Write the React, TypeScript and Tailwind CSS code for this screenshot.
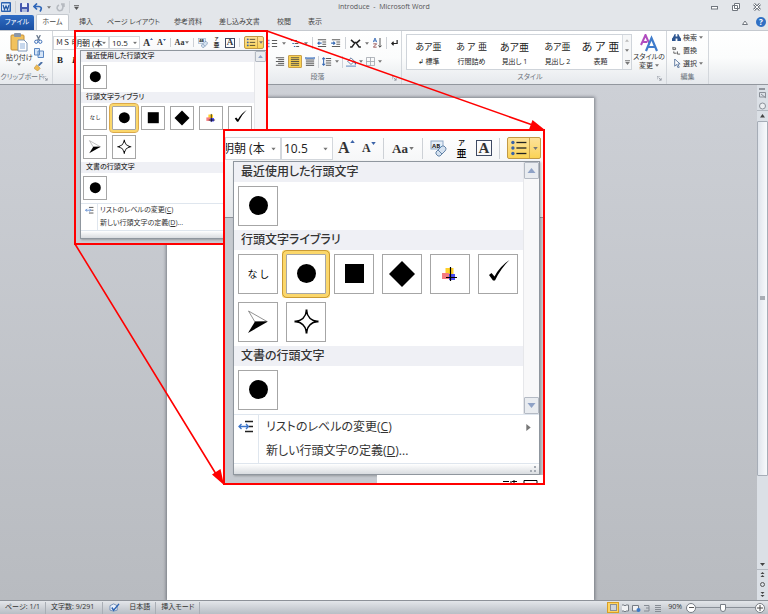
import React from "react";

type Size = "small" | "large";

const JP = "font-['Open_Sans','Noto_Sans_CJK_JP',sans-serif] [font-feature-settings:'palt']";

function Caret({ className = "" }: { className?: string }) {
  return (
    <svg viewBox="0 0 6 4" className={"shrink-0 " + (className || "h-[3px] w-[4px]")} aria-hidden="true">
      <path d="M0 0H6L3 4Z" fill="#777" />
    </svg>
  );
}

function Sep() {
  return <span className="h-3 w-px shrink-0 bg-[#cdd1d6]" />;
}

/* ---------- bullet glyphs ---------- */

type Glyph = "none" | "dot" | "square" | "diamond" | "plus" | "check" | "arrow" | "star";

function BulletGlyph({ kind }: { kind: Glyph }) {
  return (
    <svg viewBox="0 0 38 38" className="block h-full w-full" aria-hidden="true">
      {kind === "dot" && <circle cx="19.5" cy="18.5" r="9.5" />}
      {kind === "square" && <rect x="10" y="9" width="19" height="19" />}
      {kind === "diamond" && <path d="M19 6L32 19L19 32L6 19Z" />}
      {kind === "plus" && (
        <g>
          <rect x="14.500" y="13" width="8" height="7" fill="#ffd02a" />
          <rect x="11" y="18" width="7" height="6" fill="#f47a80" />
          <rect x="18" y="19" width="6" height="6" fill="#4a4af0" />
          <path d="M19.500 12V26M15 22.500H26" stroke="#000" strokeWidth="1.200" />
        </g>
      )}
      {kind === "check" && <path d="M10 20L12.500 18L15.500 21.500Q21 11 30.500 5Q22 13 16 25.500L14 25.500Z" />}
      {kind === "arrow" && (
        <g>
          <path d="M9.500 8L28 18.500L16 19Z" fill="#fff" stroke="#777" strokeWidth="0.800" />
          <path d="M16 18.500L29 18.500L9 30Z" />
        </g>
      )}
      {kind === "star" && (
        <g fill="none" stroke="#000" strokeWidth="1.300">
          <path d="M19.500 9.500Q21 17 28.500 18.500Q21 20 19.500 27.500Q18 20 10.500 18.500Q18 17 19.500 9.500Z" transform="translate(-2.340 -2.220) scale(1.120)" />
          <path d="M19.500 6.500V11M19.500 26V30.500M7.500 18.500H12M27 18.500H31.500" strokeWidth="2" />
        </g>
      )}
    </svg>
  );
}

const sizes = {
  small: {
    header: "h-[11px] pl-[5px] text-[7px]",
    grid: "gap-[5px] py-[3px] pl-[2px]",
    cell: "size-6",
    selected: "ring-2 ring-[#fbd76b] outline-1 outline-offset-2 outline-[#dba94a] rounded-[1px]",
    none: "text-[5px]",
    list: "w-[173px]",
    scroll: "w-[12px]",
    scrollButton: "h-[11px]",
    scrollCaret: "h-[3px] w-[5px]",
    item: "h-[13px] text-[7px]",
    iconCol: "w-[17px]",
    icon: "size-[9px]",
    label: "pl-[2px]",
    footer: "h-[7px]",
    combo: "h-[13px] text-[8px]",
    combo1: "w-[33px]",
    combo2: "w-[31px]",
    caret: "right-[2px] h-[3px] w-[4px]",
    row: "h-[18px] pt-[4px]",
    tools: "pl-[3px] pr-[2px]",
    grow: "w-[10px] text-[10px]",
    shrink: "w-[9px] text-[8px]",
    tri: "h-[2px] w-[3px]",
    aa: "w-[14px] text-[8px]",
    aaCaret: "h-[3px] w-[4px]",
    tool: "size-[10px]",
    ruby: "w-[9px]",
    rubyTop: "text-[4px] leading-[5px]",
    rubyBase: "text-[6px] leading-[7px]",
    boxed: "size-[10px] text-[9px] leading-[9px]",
    split: "h-[13px] w-[20px]",
    splitMain: "w-[13px]",
    sep: "h-[9px]",
  },
  large: {
    header: "h-5 pl-[7px] text-[12px]",
    grid: "gap-2 py-1 pl-1",
    cell: "size-10",
    selected: "ring-4 ring-[#fbd76b] outline-1 outline-offset-3 outline-[#c99a35] rounded-[1px]",
    none: "text-[10px]",
    list: "w-[289px]",
    scroll: "w-[16px]",
    scrollButton: "h-[17px]",
    scrollCaret: "h-[5px] w-[9px]",
    item: "h-6 text-[12px]",
    iconCol: "w-[25px]",
    icon: "size-[16px]",
    label: "pl-[7px]",
    footer: "h-[10px]",
    combo: "h-[23px] text-[12px]",
    combo1: "w-[56px]",
    combo2: "w-[52px]",
    caret: "right-[4px] h-[3px] w-[5px]",
    row: "h-[30px] pt-[6px]",
    tools: "pl-[5px] pr-[2px]",
    grow: "w-[17px] text-[16px]",
    shrink: "w-[14px] text-[12px]",
    tri: "h-[3px] w-[5px]",
    aa: "w-[24px] text-[13px]",
    aaCaret: "h-[3px] w-[5px]",
    tool: "size-[17px]",
    ruby: "w-[15px]",
    rubyTop: "text-[7px] leading-[9px]",
    rubyBase: "text-[10px] leading-[12px]",
    boxed: "size-[16px] text-[15px] leading-[14px]",
    split: "h-[22px] w-[34px]",
    splitMain: "w-[22px]",
    sep: "h-[21px]",
  },
} as const;

function Combo({ size, label, value, width, shift }: { size: Size; label: string; value: string; width: string; shift: string }) {
  const s = sizes[size];
  return (
    <div className={"relative shrink-0 overflow-hidden border border-[#d3d7dc] bg-white " + s.combo + " " + width}>
      <select aria-label={label} defaultValue={value} className={"h-full w-full appearance-none bg-transparent text-[#222] outline-none " + shift}>
        <option>{value}</option>
      </select>
      <svg viewBox="0 0 6 4" className={"pointer-events-none absolute top-1/2 -translate-y-1/2 " + s.caret} aria-hidden="true">
        <path d="M0 0H6L3 4Z" fill="#777" />
      </svg>
    </div>
  );
}

function EraserIcon() {
  return (
    <svg viewBox="0 0 17 17" className="h-full w-full" aria-hidden="true">
      <rect x="1" y="1" width="12" height="8" fill="#e6eef7" stroke="#8ea8c6" />
      <text x="2" y="7.500" fontSize="6" fontWeight="700" fill="#222">AB</text>
      <path d="M6 12L12 6Q14 5 16 8Q16 10 15 11L10 16Q8 17 6 14Z" fill="#d5e2f0" stroke="#6685a8" />
      <path d="M8 10L12 14" stroke="#6685a8" />
    </svg>
  );
}

function BulletsIcon() {
  return (
    <svg viewBox="0 0 16 16" className="h-[80%] w-[80%]" aria-hidden="true">
      {[2.5, 8, 13.5].map((y) => (
        <g key={y}>
          <circle cx="2.500" cy={y} r="1.700" fill="#3b63a8" />
          <path d={`M6 ${y}H16`} stroke="#222" strokeWidth="1.300" />
        </g>
      ))}
    </svg>
  );
}

function Toolbar({ size }: { size: Size }) {
  const s = sizes[size];
  const bar = <span className={"w-px shrink-0 bg-[#cdd1d6] " + s.sep} />;
  const btn = "relative flex shrink-0 items-center justify-center ";
  return (
    <div className={"flex items-start " + s.row}>
      <Combo size={size} label="フォント" value="明朝 (本" width={s.combo1} shift={size === "large" ? "-ml-1" : "-ml-[3px]"} />
      <Combo size={size} label="フォント サイズ" value="10.5" width={s.combo2} shift="pl-[2px]" />
      <div className={"flex min-w-0 flex-1 items-center justify-between " + s.tools}>
        <button className={btn + "justify-start font-['Liberation_Serif',serif] leading-none font-bold text-[#333] " + s.grow}>
          A
          <svg viewBox="0 0 6 4" className={"absolute top-0 right-0 " + s.tri}><path d="M0 4H6L3 0Z" fill="#3b63a8" /></svg>
        </button>
        <button className={btn + "justify-start font-['Liberation_Serif',serif] leading-none font-bold text-[#333] " + s.shrink}>
          A
          <svg viewBox="0 0 6 4" className={"absolute top-0 right-0 " + s.tri}><path d="M0 0H6L3 4Z" fill="#3b63a8" /></svg>
        </button>
        {bar}
        <button className={btn + "gap-px font-['Liberation_Serif',serif] leading-none font-bold text-[#333] " + s.aa}>
          Aa
          <Caret className={s.aaCaret} />
        </button>
        {bar}
        <button aria-label="書式のクリア" className={btn + s.tool}><EraserIcon /></button>
        <button className={btn + "flex-col font-medium text-black " + s.ruby}>
          <span className={s.rubyTop}>ア</span>
          <span className={s.rubyBase}>亜</span>
        </button>
        <button className={btn + "border border-[#3f4a63] font-['Liberation_Serif',serif] font-bold text-[#333] " + s.boxed}>A</button>
        {bar}
        <button aria-label="箇条書き" className={"flex shrink-0 rounded-[2px] border border-[#c29a45] bg-linear-to-b from-[#fde29a] to-[#fbd353] " + s.split}>
          <span className={"flex h-full items-center justify-center border-r border-[#c9a350] " + s.splitMain}><BulletsIcon /></span>
          <span className="flex h-full flex-1 items-center justify-center"><Caret className={s.aaCaret} /></span>
        </button>
      </div>
    </div>
  );
}

function Cells({ size, items, selected }: { size: Size; items: Glyph[]; selected?: number }) {
  const s = sizes[size];
  return (
    <div className={"flex flex-wrap " + s.grid}>
      {items.map((k, i) => (
        <button
          key={i}
          className={"flex items-center justify-center border border-[#a6a6a6] bg-white text-black " + s.cell + " " + (i === selected ? s.selected : "")}
        >
          {k === "none" ? <span className={s.none}>な し</span> : <BulletGlyph kind={k} />}
        </button>
      ))}
    </div>
  );
}

function BulletPanel({ size }: { size: Size }) {
  const s = sizes[size];
  const header = "flex items-center bg-[#eff0f5] font-medium text-[#333] " + s.header;
  const arrow = "flex w-full items-center justify-center rounded-[1px] border border-[#b4bac4] bg-[#e9ecf0] " + s.scrollButton;
  return (
    <section className="border border-[#8f969e] bg-white shadow-[1px_1px_2px_rgba(0,0,0,0.25)]">
      <div className="flex">
        <div className={"shrink-0 " + s.list}>
          <h3 className={header}>最近使用した行頭文字</h3>
          <Cells size={size} items={["dot"]} />
          <h3 className={header}>行頭文字ライブラリ</h3>
          <Cells size={size} items={["none", "dot", "square", "diamond", "plus", "check", "arrow", "star"]} selected={1} />
          <h3 className={header}>文書の行頭文字</h3>
          <Cells size={size} items={["dot"]} />
        </div>
        <div className={"flex shrink-0 flex-col justify-between border-l border-[#e6e7ea] bg-[#f8f8f9] " + s.scroll}>
          <button aria-label="上へ" className={arrow}>
            <svg viewBox="0 0 8 5" className={s.scrollCaret}><path d="M0 5H8L4 0Z" fill="#8fa2c6" /></svg>
          </button>
          <button aria-label="下へ" className={arrow}>
            <svg viewBox="0 0 8 5" className={s.scrollCaret}><path d="M0 0H8L4 5Z" fill="#8fa2c6" /></svg>
          </button>
        </div>
      </div>
      <div className="border-y border-[#dfe6ee] text-[#333]">
        <button className={"flex w-full items-center " + s.item}>
          <span className={"flex h-full items-center justify-center border-r border-[#dfe6ee] " + s.iconCol}>
            <svg viewBox="0 0 16 16" className={s.icon} aria-hidden="true">
              <path d="M7 2.500H15M11 7.500H15M7 12.500H15" stroke="#222" strokeWidth="1.300" />
              <path d="M1 7.500H10M3.500 5L1 7.500L3.500 10M8 5L10.500 7.500L8 10" stroke="#3b73c8" strokeWidth="1.300" fill="none" />
            </svg>
          </span>
          <span className={"flex-1 text-left " + s.label}>リストのレベルの変更(<u>C</u>)</span>
          <svg viewBox="0 0 5 8" className="mr-2 h-[7px] w-[5px]" aria-hidden="true"><path d="M0 0L5 4L0 8Z" fill="#777" /></svg>
        </button>
        <button className={"flex w-full items-center " + s.item}>
          <span className={"h-full border-r border-[#dfe6ee] " + s.iconCol} />
          <span className={"flex-1 text-left " + s.label}>新しい行頭文字の定義(<u>D</u>)...</span>
        </button>
      </div>
      <div className={"flex items-end justify-end bg-linear-to-b from-white to-[#d9dce0] pr-[3px] pb-[2px] " + s.footer}>
        <svg viewBox="0 0 6 6" className="size-[6px]" aria-hidden="true">
          <path d="M4 0H6V2H4ZM4 4H6V6H4ZM0 4H2V6H0Z" fill="#a5abb3" />
        </svg>
      </div>
    </section>
  );
}

/* ---------- ribbon ---------- */

const tabs = ["挿入", "ページ レイアウト", "参考資料", "差し込み文書", "校閲", "表示"];
const tabWidths = ["w-[34px]", "w-[61px]", "w-[48px]", "w-[55px]", "w-[34px]", "w-[28px]"];

function Lines({ kind }: { kind: "number" | "multi" | "dedent" | "indent" | "right" | "justify" | "distribute" | "spacing" }) {
  const paths = {
    number: "M5 2H12M5 6H12M5 10H12",
    multi: "M4 2H9M6 6H11M8 10H12",
    dedent: "M1 1H12M7 4H12M7 7H12M1 10H12",
    indent: "M1 1H12M7 4H12M7 7H12M1 10H12",
    right: "M1 1H12M4 3.500H12M1 6H12M4 8.500H12M1 11H12",
    justify: "M1 1H12M1 3.500H12M1 6H12M1 8.500H12M1 11H12",
    distribute: "M1 4H12M1 6.500H12M1 9H12M1 11.500H12",
    spacing: "M5 2H12M5 5H12M5 8H12M5 11H12",
  };
  const blue = {
    number: "M1 1V3M1 5V7M1 9V11",
    multi: "M1 2H3M3 6H5M5 10H7",
    dedent: "M6 5.500H1M3 3.500L1 5.500L3 7.500",
    indent: "M0 5.500H5M3 3.500L5 5.500L3 7.500",
    right: "",
    justify: "",
    distribute: "M1 0V3M12 0V3M2 1.500H11",
    spacing: "M2 1V11M0 3L2 1L4 3M0 9L2 11L4 9",
  };
  return (
    <svg viewBox="0 0 13 12" className="h-[9px] w-[10px] shrink-0" aria-hidden="true" fill="none">
      <path d={paths[kind]} stroke="#4a4a4a" strokeWidth="1.200" />
      <path d={blue[kind]} stroke="#3569b5" strokeWidth="1.400" />
    </svg>
  );
}

function Launcher() {
  return (
    <svg viewBox="0 0 6 6" className="absolute right-1 bottom-[3px] size-[5px]" aria-hidden="true">
      <path d="M0 4V0H4M2 2L5 5M5 2.500V5H2.500" stroke="#8b929b" fill="none" />
    </svg>
  );
}

function Group({ label, width, children, launcher }: { label: string; width: string; children: React.ReactNode; launcher?: boolean }) {
  return (
    <section className={"relative flex shrink-0 flex-col border-r border-[#d3d7dc] " + width}>
      <div className="flex-1">{children}</div>
      <div className="h-[12px] text-center text-[7px] leading-[10px] whitespace-nowrap text-[#6d747d]">{label}</div>
      {launcher && <Launcher />}
    </section>
  );
}

const styleItems = [
  { sample: "あア亜", name: "↲ 標準", cls: "text-[9px]" },
  { sample: "あ ア 亜", name: "行間詰め", cls: "text-[9px]" },
  { sample: "あア亜", name: "見出し 1", cls: "text-[10px]" },
  { sample: "あア亜", name: "見出し 2", cls: "text-[9px]" },
  { sample: "あ ア 亜", name: "表題", cls: "text-[11px]" },
];

function Ribbon() {
  return (
    <div className="flex h-[55px] shrink-0 overflow-hidden border-t border-b border-t-[#c5c9cf] border-b-[#92979e] bg-linear-to-b from-white via-[#fbfcfc] to-[#e6e9ed]">
      <Group label="クリップボード" width="w-[53px] pr-[8px]" launcher>
        <div className="flex justify-between pt-[2px] pl-[6px]">
          <button className="flex flex-col items-center text-[7px] leading-[11px] whitespace-nowrap text-[#333]">
            <svg viewBox="0 0 18 19" className="h-[19px] w-[18px]" aria-hidden="true">
              <rect x="1" y="2" width="13" height="15" rx="1" fill="#f2c25e" stroke="#c68f35" />
              <rect x="4" y="0" width="7" height="4" rx="1" fill="#8b97a8" />
              <path d="M8 7H14L17 10V18H8Z" fill="#fff" stroke="#7d95b5" />
              <path d="M10 11H15M10 13H15M10 15H15" stroke="#8fb0da" />
            </svg>
            貼り付け
            <Caret />
          </button>
          <div className="flex flex-col gap-1 pt-[2px]">
            <svg viewBox="0 0 10 10" className="size-[9px]"><path d="M3 0L6 6M7 0L4 6" stroke="#68778c" strokeWidth="1.400" /><circle cx="2.500" cy="7.500" r="1.800" fill="none" stroke="#2c63b2" /><circle cx="7" cy="7.500" r="1.800" fill="none" stroke="#2c63b2" /></svg>
            <svg viewBox="0 0 10 10" className="size-[10px]"><path d="M0.500 0.500H5.500V7H0.500ZM4 3H9.500V9.500H4Z" fill="#d6e5f7" stroke="#5c88c2" /></svg>
            <svg viewBox="0 0 10 10" className="size-[9px]"><path d="M9 0L5 4" stroke="#4a6fa5" strokeWidth="2" /><path d="M3 3L7 7L4 10L0 7Z" fill="#edbb55" stroke="#b07f27" strokeWidth="0.500" /></svg>
          </div>
        </div>
      </Group>
      <Group label="フォント" width="w-[203px]">
        <div className="mt-[5px] flex h-[14px] w-[54px] items-center border border-[#d3d7dc] bg-white pl-[2px] text-[7px] whitespace-nowrap text-[#222] [font-feature-settings:normal]">ＭＳ 明朝</div>
        <div className="flex gap-[9px] pt-[5px] pl-[4px] font-['Liberation_Serif',serif] text-[9px] leading-[11px] font-bold text-[#222]">
          <button>B</button>
          <button className="italic">I</button>
        </div>
      </Group>
      <Group label="段落" width="w-[146px] pr-[22px]" launcher>
        <div className="flex h-[24px] w-[146px] items-center gap-[4px] pl-[12px]">
          <Lines kind="number" /><Caret /><Lines kind="multi" /><Caret /><Sep />
          <Lines kind="dedent" /><Lines kind="indent" /><Sep />
          <svg viewBox="0 0 12 10" className="h-[9px] w-[11px] shrink-0"><path d="M0 9H2L5.500 4H6.500L10 9H12M1 1L5 4.500M11 1L7 4.500" stroke="#222" strokeWidth="1.700" fill="none" /></svg>
          <Caret />
          <svg viewBox="0 0 10 12" className="h-[10px] w-[9px] shrink-0"><path d="M0 5L2 0L4 5M0.500 3.500H3.500" stroke="#2c63b2" fill="none" /><path d="M0 7H4L0 11H4" stroke="#8b3c3c" fill="none" /><path d="M8 0V11M6 9L8 11L10 9" stroke="#333" fill="none" /></svg>
          <Sep />
          <svg viewBox="0 0 8 8" className="size-[7px] shrink-0"><path d="M7 0V4H1M3 2L1 4L3 6" stroke="#222" strokeWidth="1.400" fill="none" /></svg>
        </div>
        <div className="flex w-[146px] items-center gap-[3px] pl-[19px]">
          <Lines kind="right" />
          <button aria-label="両端揃え" className="flex h-[13px] w-[14px] items-center justify-center rounded-[1px] border border-[#c9a04a] bg-[#fbd353]"><Lines kind="justify" /></button>
          <Lines kind="distribute" />
          <Sep /><Lines kind="spacing" /><Caret /><Sep />
          <svg viewBox="0 0 12 12" className="size-[10px] shrink-0"><path d="M2 5L6 1L10 5L6 9Z" fill="#fff" stroke="#4c6791" /><path d="M10 5Q12 7 11 9" stroke="#2c63b2" strokeWidth="1.500" fill="none" /><path d="M0 11H12" stroke="#9bb5d6" strokeWidth="2" /></svg>
          <Caret />
          <svg viewBox="0 0 10 10" className="size-[9px] shrink-0"><path d="M0.500 0.500H9.500V9.500H0.500ZM5 0V10M0 5H10" stroke="#a6abb2" fill="none" /></svg>
          <Caret />
        </div>
      </Group>
      <Group label="スタイル" width="w-[265px] pr-[8px]" launcher>
        <div className="flex gap-[3px] pt-[3px] pl-1">
          <div className="flex h-[36px] w-[226px] shrink-0 border border-[#cfd4da] bg-white">
            {styleItems.map((s, i) => (
              <button key={i} className="flex w-[43px] shrink-0 flex-col items-center justify-between pt-px pb-[2px] whitespace-nowrap text-[#222]">
                <span className={"flex h-[22px] items-center leading-none " + s.cls}>{s.sample}</span>
                <span className="text-[7px] leading-[10px]">{s.name}</span>
              </button>
            ))}
            <div className="flex flex-1 flex-col items-center justify-around border-l border-[#d9dde2] bg-[#f6f7f8]">
              <svg viewBox="0 0 6 4" className="h-[3px] w-[4px]"><path d="M0 4H6L3 0Z" fill="#bbb" /></svg>
              <Caret />
              <svg viewBox="0 0 6 6" className="h-[5px] w-[5px]"><path d="M0 0.500H6" stroke="#777" /><path d="M0 2H6L3 6Z" fill="#777" /></svg>
            </div>
          </div>
          <button className="flex w-[28px] flex-col items-center text-[7px] leading-[9px] whitespace-nowrap text-[#333]">
            <svg viewBox="0 0 18 18" className="size-[18px]" aria-hidden="true">
              <path d="M1 11L5.500 1L9 9M2.500 8H7" stroke="#b04cbe" strokeWidth="2" fill="none" />
              <path d="M6 17L11.500 4L17 17M8 13H15" stroke="#3e7bcb" strokeWidth="2.200" fill="none" />
            </svg>
            スタイルの
            <span className="flex items-center gap-[2px]">変更<Caret /></span>
          </button>
        </div>
      </Group>
      <Group label="編集" width="w-[42px]">
        <div className="flex flex-col gap-[2px] pt-px pl-[5px] text-[7px] leading-[11px] text-[#333]">
          <button className="flex items-center gap-[2px]">
            <svg viewBox="0 0 10 10" className="size-[9px]"><path d="M1 5L3 1H4V9H0V6ZM9 5L7 1H6V9H10V6ZM4 4H6V6H4Z" fill="#2d5590" /></svg>
            検索 <Caret />
          </button>
          <button className="flex items-center gap-[2px]">
            <svg viewBox="0 0 10 10" className="size-[9px]"><path d="M1 4V1M1 4H4V2H1M6 9V6M6 9H9M2 6V8H5" stroke="#555" fill="none" /></svg>
            置換
          </button>
          <button className="flex items-center gap-[2px]">
            <svg viewBox="0 0 10 10" className="size-[9px]"><path d="M3 0V8L5 6L7 10L8 9L6.500 5.500H9Z" fill="#fff" stroke="#58749c" /></svg>
            選択 <Caret />
          </button>
        </div>
      </Group>
    </div>
  );
}

function TitleBar() {
  return (
    <header className="relative flex h-[14px] shrink-0 items-center justify-center text-[7px] text-[#555]">
      <div className="absolute inset-y-0 left-px flex items-center gap-1">
        <svg viewBox="0 0 10 10" className="size-[10px]"><rect width="10" height="10" rx="1" fill="#2b62b0" /><rect x="1" y="1.500" width="7.500" height="7" fill="#dbe8f8" /><path d="M2 3L3.500 7.500L5 4L6.500 7.500L8 3" stroke="#2458a2" strokeWidth="1.200" fill="none" /></svg>
        <Sep />
        <svg viewBox="0 0 9 9" className="size-[9px]"><rect width="9" height="9" rx="1" fill="#4558ae" /><rect x="2" width="5" height="4" fill="#e9eefa" /><rect x="2" y="6" width="5" height="3" fill="#aebbdc" /></svg>
        <svg viewBox="0 0 10 9" className="h-[9px] w-[10px]"><path d="M1 3.500H6Q10 4 7 8.500M4 0.500L1 3.500L4 6.500" stroke="#2f66b8" strokeWidth="1.700" fill="none" /></svg>
        <Caret />
        <svg viewBox="0 0 10 9" className="h-[9px] w-[10px]"><path d="M7 1Q9 4 7 7Q3 9 2 5Q2 3 4 2M6 1H9V4" stroke="#b6bac0" strokeWidth="1.500" fill="none" /></svg>
        <Sep />
        <svg viewBox="0 0 6 6" className="h-[5px] w-[5px]"><path d="M0 0.500H6" stroke="#555" /><path d="M0 2H6L3 6Z" fill="#555" /></svg>
      </div>
      <h1>introduce&nbsp; -&nbsp; Microsoft Word</h1>
      <div className="absolute inset-y-0 right-[7px] flex items-center gap-[13px]">
        <button aria-label="最小化"><svg viewBox="0 0 8 8" className="size-[8px]"><rect x="0.500" y="3.500" width="6" height="2.500" fill="#fff" stroke="#70767e" /></svg></button>
        <button aria-label="元に戻す"><svg viewBox="0 0 8 8" className="size-[8px]"><path d="M2.500 0.500H7.500V5.500H2.500ZM0.500 2.500H5.500V7.500H0.500Z" fill="#fff" stroke="#70767e" /></svg></button>
        <button aria-label="閉じる"><svg viewBox="0 0 8 8" className="size-[8px]"><path d="M1 1L7 7M7 1L1 7" stroke="#70767e" strokeWidth="2.500" /><path d="M1 1L7 7M7 1L1 7" stroke="#fff" /></svg></button>
      </div>
    </header>
  );
}

function Tabs() {
  return (
    <nav className="flex h-[16px] shrink-0 items-end text-[7px] whitespace-nowrap text-[#444]">
      <button className="mr-[2px] h-[15px] w-[34px] rounded-t-[2px] bg-linear-to-b from-[#2f6cc4] to-[#1b4fa0] text-white">ファイル</button>
      <button className="h-[16px] w-[33px] rounded-t-[2px] border border-b-0 border-[#c5c9cf] bg-white">ホーム</button>
      {tabs.map((t, i) => (
        <button key={t} className={"h-full text-center " + tabWidths[i]}>{t}</button>
      ))}
      <div className="ml-auto flex h-full items-center gap-2 pr-[2px]">
        <svg viewBox="0 0 6 5" className="h-[5px] w-[6px]"><path d="M0.500 4.500L3 1L5.500 4.500Z" fill="#fff" stroke="#70767e" /></svg>
        <button aria-label="ヘルプ" className="flex size-[10px] items-center justify-center rounded-full bg-[#2f70c4] text-[8px] leading-none font-bold text-white">?</button>
      </div>
    </nav>
  );
}

function ScrollColumn() {
  return (
    <aside className="flex w-[11px] shrink-0 flex-col items-center bg-[#dbe0e6]">
      <svg viewBox="0 0 11 36" className="h-[36px] w-[11px] shrink-0" aria-hidden="true">
        <path d="M2 4H8" stroke="#777d85" strokeWidth="1.500" />
        <path d="M2.500 7.500H8.500V12H2.500ZM4 9L9 13" stroke="#8a9098" fill="none" />
        <circle cx="5.500" cy="21" r="3" fill="#eceef1" stroke="#8a9098" />
        <path d="M0 25.500H11" stroke="#b3b9c1" />
        <path d="M3 32.500H8L5.500 29Z" fill="#444" />
      </svg>
      <div className="flex w-full grow-[355] basis-0 flex-col items-center justify-center rounded-[1px] border border-[#a6adb7] bg-linear-to-r from-[#e0e5ec] to-[#f8fafc]">
        <span className="h-[4px] w-[5px] bg-[#a9aeb5]" />
      </div>
      <div className="grow-[83] basis-0" />
      <svg viewBox="0 0 11 42" className="h-[42px] w-[11px] shrink-0" aria-hidden="true">
        <path d="M3 5H8L5.500 8Z" fill="#444" />
        <path d="M0 11.500H11" stroke="#b3b9c1" />
        <path d="M3.500 16L5.500 14L7.500 16ZM3.500 19L5.500 17L7.500 19Z" fill="#444" />
        <circle cx="5.500" cy="26.500" r="2" fill="none" stroke="#555" />
        <path d="M3.500 34L5.500 36L7.500 34ZM3.500 37L5.500 39L7.500 37Z" fill="#444" />
      </svg>
    </aside>
  );
}

function StatusBar() {
  const bar = <span className="h-[12px] w-px bg-[#a9aeb5]" />;
  return (
    <footer className="flex h-[14px] shrink-0 items-center gap-[5px] border-t border-[#8d9299] bg-linear-to-b from-[#e3e6ea] to-[#b9bec5] pl-[5px] text-[7px] whitespace-nowrap text-[#333]">
      <span>ページ: 1/1</span>
      {bar}
      <span className="pr-[3px]">文字数: 9/291</span>
      {bar}
      <svg viewBox="0 0 12 10" className="mx-px h-[9px] w-[11px]"><path d="M1 3L5 1L9 3V8L5 9L1 8Z" fill="#e9f0fa" stroke="#6e8bb5" /><path d="M3 5L5 8L11 1" stroke="#2c63b2" strokeWidth="1.600" fill="none" /></svg>
      <span className="pl-[3px]">日本語</span>
      {bar}
      <span>挿入モード</span>
      {bar}
      <div className="ml-auto flex items-center">
        <button aria-label="印刷レイアウト" className="mr-[3px] flex h-[11px] w-[12px] items-center justify-center border border-[#d99f26] bg-[#fdd462]"><span className="h-[7px] w-[7px] border border-[#8a8f96] bg-[#cfd4db]" /></button>
        <svg viewBox="0 0 46 10" className="h-[10px] w-[46px]" aria-hidden="true">
          <path d="M-1.500 2H1L2 3L3 2H5.500V8H3L2 9L1 8H-1.500Z" transform="translate(1 0)" fill="#f1f2f4" stroke="#777d85" />
          <path d="M10.500 2.500H16.500V8H10.500Z" fill="#f1f2f4" stroke="#777d85" /><circle cx="16.500" cy="7" r="2" fill="#3f79c4" />
          <path d="M22 2.500H27V8H22M24 5H27" stroke="#868c94" fill="none" />
          <path d="M33 2.500H39M33 4.500H39M33 6.500H39M33 8.500H39" stroke="#868c94" />
        </svg>
        <span className="pr-[4px]">90%</span>
        <button aria-label="縮小" className="flex size-[10px] items-center justify-center rounded-full border border-[#777d85] bg-white"><span className="h-px w-[5px] bg-[#555]" /></button>
        <input
          type="range"
          aria-label="ズーム"
          defaultValue={45}
          className="h-px w-[59px] appearance-none bg-[#8a9098] [&::-webkit-slider-thumb]:h-[8px] [&::-webkit-slider-thumb]:w-[6px] [&::-webkit-slider-thumb]:appearance-none [&::-webkit-slider-thumb]:rounded-b-[3px] [&::-webkit-slider-thumb]:border [&::-webkit-slider-thumb]:border-[#777d85] [&::-webkit-slider-thumb]:bg-white"
        />
        <button aria-label="拡大" className="mr-[3px] flex size-[10px] items-center justify-center rounded-full border border-[#777d85] bg-white">
          <svg viewBox="0 0 6 6" className="size-[6px]"><path d="M0 3H6M3 0V6" stroke="#444" /></svg>
        </button>
      </div>
    </footer>
  );
}

/* ---------- annotations over the window ---------- */

function SmallCallout() {
  return (
    <div className="absolute top-[30px] left-[74px] w-[194px] overflow-hidden border-2 border-[#f00] bg-[linear-gradient(to_bottom,#fff_0px,#eceef1_52px,#92979e_52px,#92979e_53px,#c8ccd2_53px)]">
      <Toolbar size="small" />
      <div className="mb-1 ml-[4px] w-[187px]">
        <BulletPanel size="small" />
      </div>
    </div>
  );
}

function LargeCallout() {
  return (
    <div className="absolute top-[129px] left-[223px] w-[322px] overflow-hidden border-2 border-[#f00] bg-[linear-gradient(to_bottom,#fff_0px,#e4e7ea_86px,#8d9299_86px,#8d9299_87px,#c5c9cf_87px)]">
      <Toolbar size="large" />
      <div className="ml-2 w-[307px]">
        <BulletPanel size="large" />
      </div>
      <div className="ml-[152px] flex h-[8px] items-end justify-end bg-white">
        <svg viewBox="0 0 36 3" className="mr-1 h-[3px] w-[36px]" aria-hidden="true">
          <path d="M0 1.500H6M8 1V3M11 0V3M9 1.500H14M21 3V0.500H34V3" stroke="#000" fill="none" />
        </svg>
      </div>
    </div>
  );
}

function Arrows() {
  return (
    <svg viewBox="0 0 768 614" className="pointer-events-none absolute top-0 left-0 h-[614px] w-[768px]" aria-hidden="true">
      <path d="M267 31L534 125.500M75 244L216 474" stroke="#f00" strokeWidth="1.600" />
      <path d="M545 130L529 129.500L532.500 120ZM224 485L212 474.500L220.500 469Z" fill="#f00" />
    </svg>
  );
}

export default function App() {
  return (
    <div className={"relative flex h-screen flex-col overflow-hidden bg-[#e3e6ea] " + JP}>
      <TitleBar />
      <Tabs />
      <Ribbon />
      <div className="flex min-h-0 flex-1">
        <main className="flex min-w-0 flex-1 justify-center bg-linear-to-b from-[#cdd0d6] to-[#b8bbc0] pt-[13px] pl-[3px]">
          <article className="w-[427px] bg-white shadow-[0_0_3px_1px_rgba(70,75,85,0.6)]" />
        </main>
        <ScrollColumn />
      </div>
      <StatusBar />
      <SmallCallout />
      <LargeCallout />
      <Arrows />
    </div>
  );
}
